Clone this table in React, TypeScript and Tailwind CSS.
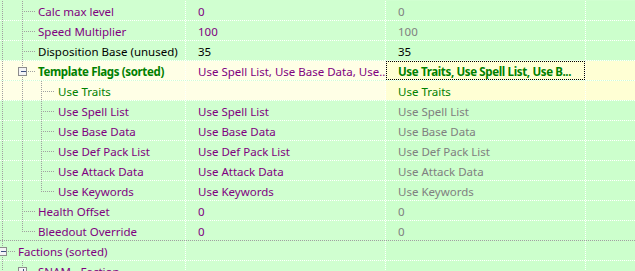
import React from 'react';

const PURPLE = 'text-[#800080]';
const GRAY = 'text-[#808080]';
const GREEN = 'text-[#008000]';
const BLACK = 'text-black';
const BOLD = 'font-bold tracking-[-0.35px]';

type Row = {
  level: number;
  name: string;
  v1: string;
  v2: string;
  nameCls: string;
  v1Cls: string;
  v2Cls: string;
  yellow?: boolean;
  last?: boolean;
  box?: 'minus' | 'plus';
  pass: number[]; // ancestor levels whose guide line runs through
  focus?: boolean;
  sep?: 'gray';
};

const ROWS: Row[] = [
  { level: 1, name: 'Calc max level', v1: '0', v2: '0', nameCls: PURPLE, v1Cls: PURPLE, v2Cls: GRAY, pass: [0] },
  { level: 1, name: 'Speed Multiplier', v1: '100', v2: '100', nameCls: PURPLE, v1Cls: PURPLE, v2Cls: GRAY, pass: [0] },
  { level: 1, name: 'Disposition Base (unused)', v1: '35', v2: '35', nameCls: BLACK, v1Cls: BLACK, v2Cls: BLACK, pass: [0] },
  {
    level: 1,
    name: 'Template Flags (sorted)',
    v1: 'Use Spell List, Use Base Data, Use...',
    v2: 'Use Traits, Use Spell List, Use B...',
    nameCls: `${GREEN} ${BOLD}`,
    v1Cls: PURPLE,
    v2Cls: `${GREEN} ${BOLD}`,
    yellow: true,
    box: 'minus',
    focus: true,
    pass: [0],
  },
  { level: 2, name: 'Use Traits', v1: '', v2: 'Use Traits', nameCls: GREEN, v1Cls: PURPLE, v2Cls: GREEN, yellow: true, pass: [0, 1] },
  { level: 2, name: 'Use Spell List', v1: 'Use Spell List', v2: 'Use Spell List', nameCls: PURPLE, v1Cls: PURPLE, v2Cls: GRAY, pass: [0, 1] },
  { level: 2, name: 'Use Base Data', v1: 'Use Base Data', v2: 'Use Base Data', nameCls: PURPLE, v1Cls: PURPLE, v2Cls: GRAY, pass: [0, 1] },
  { level: 2, name: 'Use Def Pack List', v1: 'Use Def Pack List', v2: 'Use Def Pack List', nameCls: PURPLE, v1Cls: PURPLE, v2Cls: GRAY, pass: [0, 1] },
  { level: 2, name: 'Use Attack Data', v1: 'Use Attack Data', v2: 'Use Attack Data', nameCls: PURPLE, v1Cls: PURPLE, v2Cls: GRAY, pass: [0, 1] },
  { level: 2, name: 'Use Keywords', v1: 'Use Keywords', v2: 'Use Keywords', nameCls: PURPLE, v1Cls: PURPLE, v2Cls: GRAY, last: true, pass: [0, 1] },
  { level: 1, name: 'Health Offset', v1: '0', v2: '0', nameCls: PURPLE, v1Cls: PURPLE, v2Cls: GRAY, pass: [0] },
  { level: 1, name: 'Bleedout Override', v1: '0', v2: '0', nameCls: PURPLE, v1Cls: PURPLE, v2Cls: GRAY, last: true, pass: [0], sep: 'gray' },
  { level: 0, name: 'Factions (sorted)', v1: '', v2: '', nameCls: PURPLE, v1Cls: PURPLE, v2Cls: GRAY, box: 'minus', pass: [] },
  { level: 1, name: 'SNAM - Faction', v1: '', v2: '', nameCls: PURPLE, v1Cls: PURPLE, v2Cls: GRAY, box: 'plus', pass: [0] },
];

const CX = [2, 22, 41];
const LINE = '#a0a0a0';

// dotted tree connector lines drawn per row
const Guides = ({ row }: { row: Row }) => {
  const w = 18 + 20 * row.level;
  const x = CX[row.level];
  const cy = 10.5;
  return (
    <svg width={w} height={19} className="flex-none" shapeRendering="crispEdges">
      {row.pass.map((k) => (
        <line key={k} x1={CX[k] + 0.5} y1={0} x2={CX[k] + 0.5} y2={19} stroke={LINE} strokeDasharray="1 1" />
      ))}
      <line x1={x + 0.5} y1={0} x2={x + 0.5} y2={row.last ? cy : 19} stroke={LINE} strokeDasharray="1 1" />
      <line x1={x} y1={cy} x2={w - 3} y2={cy} stroke={LINE} strokeDasharray="1 1" />
      {row.box && (
        <g>
          <rect x={x - 3.5} y={6.5} width={8} height={8} fill="#f3f4f6" stroke="#8c8c8c" />
          <line x1={x - 1} y1={cy} x2={x + 4} y2={cy} stroke="#3b4f80" />
          {row.box === 'plus' && <line x1={x + 1.5} y1={8} x2={x + 1.5} y2={13} stroke="#3b4f80" />}
        </g>
      )}
    </svg>
  );
};

export default function App() {
  return (
    <div className="h-[271px] w-[635px] overflow-hidden bg-[#d0ffd0] pt-px font-['Noto_Sans',sans-serif] text-[11.5px] leading-none">
      {ROWS.map((row, i) => {
        const left = row.yellow ? 'bg-[#ffffe6]' : 'bg-[#d0ffd0]';
        const right = row.yellow ? 'bg-[#ffffd4]' : 'bg-[#ccffcc]';
        const sep = row.sep === 'gray' ? 'border-[#a0a0a0]' : 'border-white';
        return (
          <div key={i} className={`flex h-5 border-b border-dotted ${sep}`}>
            <div className={`flex w-[186px] flex-none items-center whitespace-nowrap border-r border-dotted border-white ${left}`}>
              <Guides row={row} />
              <span className={`pt-[2px] ${row.nameCls}`}>{row.name}</span>
            </div>
            <div className={`flex w-[200px] flex-none items-center whitespace-nowrap border-r border-dotted border-white pl-3 ${left}`}>
              <span className={`pt-[2px] ${row.v1Cls}`}>{row.v1}</span>
            </div>
            <div className={`flex w-[200px] flex-none whitespace-nowrap border-r border-dotted border-white ${right}`}>
              <div className={`flex flex-1 items-center ${row.focus ? 'border border-dotted border-black pl-[11px]' : 'pl-3'}`}>
                <span className={`pt-[2px] ${row.v2Cls}`}>{row.v2}</span>
              </div>
            </div>
            <div className={`flex-1 ${right}`} />
          </div>
        );
      })}
    </div>
  );
}
